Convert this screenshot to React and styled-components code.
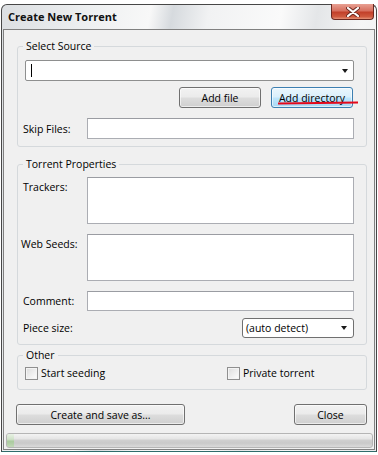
import styled, { createGlobalStyle } from "styled-components";

const Global = createGlobalStyle`
  html, body {
    margin: 0;
    padding: 0;
    background: #fff;
  }
  body {
    width: 378px;
    height: 455px;
    overflow: hidden;
    font-family: "Open Sans", "Noto Sans", sans-serif;
    font-size: 10.5px;
    color: #000;
  }
  * { box-sizing: border-box; }
`;

export default function App() {
  return (
    <>
      <Global />
      <Window>
        <TitleBar>
          <Title>Create New Torrent</Title>
          <CloseX>
            <svg width="14" height="10" viewBox="0 0 14 10">
              <path d="M2 1 L12 9 M12 1 L2 9" stroke="#6b2a22" strokeWidth="4" strokeLinecap="round" />
              <path d="M2 1 L12 9 M12 1 L2 9" stroke="#fff" strokeWidth="2.2" strokeLinecap="round" />
            </svg>
          </CloseX>
        </TitleBar>

        <Client>
          <Content>
            <Group $pad="0 12px 7px 5px">
              <Legend>Select Source</Legend>
              <Combo>
                <Caret />
                <Arrow />
              </Combo>
              <ButtonRow>
                <Button $w={82}>Add file</Button>
                <Marked>
                  <Button $w={82} $focus>Add directory</Button>
                  <RedLine />
                </Marked>
              </ButtonRow>
              <FieldRow $top={10}>
                <Label>Skip Files:</Label>
                <Input />
              </FieldRow>
            </Group>

            <Group $top={10} $pad="0 12px 6px 5px">
              <Legend>Torrent Properties</Legend>
              <FieldRow $top={6} $start>
                <Label $padTop={3}>Trackers:</Label>
                <Area />
              </FieldRow>
              <FieldRow $top={10} $start>
                <Label $padTop={3} $shift={-2}>Web Seeds:</Label>
                <Area />
              </FieldRow>
              <FieldRow $top={10}>
                <Label>Comment:</Label>
                <Input $h={20} />
              </FieldRow>
              <FieldRow $top={7}>
                <Label>Piece size:</Label>
                <Select>
                  <span>(auto detect)</span>
                  <Arrow />
                </Select>
              </FieldRow>
            </Group>

            <Group $top={3} $pad="0 14px 9px 5px">
              <Legend>Other</Legend>
              <CheckRow>
                <Check $w={202}>
                  <Box />
                  Start seeding
                </Check>
                <Check>
                  <Box />
                  Private torrent
                </Check>
              </CheckRow>
            </Group>

            <Actions>
              <Button $w={169}>Create and save as...</Button>
              <Button $w={73}>Close</Button>
            </Actions>
          </Content>

          <Progress>
            <Fill style={{ width: "2%" }} />
          </Progress>
        </Client>
      </Window>
    </>
  );
}

const Window = styled.div`
  margin: 4px 0 0 1px;
  width: 376px;
  height: 448px;
  border: 1px solid #474747;
  border-bottom-color: #2f6c6c;
  border-radius: 6px 6px 0 0;
  background: linear-gradient(100deg, #dcdfe2 0%, #eef0f1 20%, #f8f8f8 33%, #d6dade 38%, #f1f2f3 46%, #fafafa 62%, #e4e6e8 70%, #f5f6f6 80%, #e8eaec 100%);
  padding: 0 1px 1px 1px;
  display: flex;
  flex-direction: column;
`;

const TitleBar = styled.div`
  height: 24px;
  display: flex;
  justify-content: space-between;
  align-items: flex-start;
  padding-left: 5px;
`;

const Title = styled.div`
  font-weight: 700;
  font-size: 11px;
  line-height: 24px;
  color: #111;
`;

const CloseX = styled.div`
  margin-top: -1px;
  margin-right: 1px;
  width: 43px;
  height: 16px;
  border: 1px solid #6a2820;
  border-top: none;
  border-radius: 0 0 4px 4px;
  background: linear-gradient(to bottom, #e8a093 0%, #d7705f 45%, #c2402a 55%, #cf5a3f 85%, #e6947a 100%);
  display: flex;
  align-items: center;
  justify-content: center;
`;

const Client = styled.div`
  flex: 1;
  background: #f0f0f0;
  border: 1px solid #808080;
  display: flex;
  flex-direction: column;
  padding-bottom: 1px;
`;

const Content = styled.div`
  padding: 9px 7px 0 13px;
  display: flex;
  flex-direction: column;
`;

const Group = styled.fieldset`
  margin: ${(p) => p.$top || 0}px 0 0 0;
  padding: ${(p) => p.$pad};
  min-width: 0;
  border: 1px solid #d5d9dc;
  border-radius: 3px;
  display: flex;
  flex-direction: column;
`;

const Legend = styled.legend`
  padding: 0 3px;
  line-height: 14px;
  color: #000;
`;

const Combo = styled.div`
  margin: 7px 0 0 2px;
  height: 21px;
  background: #fff;
  border: 1px solid #8e8f8f;
  border-radius: 2px;
  display: flex;
  align-items: center;
  justify-content: space-between;
  padding: 0 4px 0 5px;
`;

const Caret = styled.div`
  width: 1px;
  height: 13px;
  background: #000;
`;

const Arrow = styled.div`
  width: 0;
  height: 0;
  border-left: 3.5px solid transparent;
  border-right: 3.5px solid transparent;
  border-top: 4px solid #1a1a1a;
  margin-right: 1px;
`;

const ButtonRow = styled.div`
  margin-top: 6px;
  display: flex;
  justify-content: flex-end;
  gap: 10px;
  padding-right: 1px;
`;

const Button = styled.div`
  width: ${(p) => p.$w}px;
  height: 21px;
  border: 1px solid ${(p) => (p.$focus ? "#3c7fb1" : "#707070")};
  border-radius: 3px;
  background: ${(p) =>
    p.$focus
      ? "linear-gradient(to bottom, #eaf6fd 0%, #d9f0fc 48%, #bee6fd 52%, #a7d9f5 100%)"
      : "linear-gradient(to bottom, #f2f2f2 0%, #ebebeb 48%, #dddddd 52%, #cfcfcf 100%)"};
  box-shadow: inset 0 0 0 1px rgba(255, 255, 255, 0.6);
  display: flex;
  align-items: center;
  justify-content: center;
  color: #000;
`;

const Marked = styled.div`
  position: relative;
`;

const RedLine = styled.div`
  position: absolute;
  left: 7px;
  top: 15px;
  width: 80px;
  height: 2px;
  background: #e3081b;
  transform: rotate(-0.8deg);
`;

const FieldRow = styled.div`
  margin-top: ${(p) => p.$top}px;
  display: flex;
  align-items: ${(p) => (p.$start ? "flex-start" : "center")};
  justify-content: space-between;
`;

const Label = styled.div`
  flex: 0 0 ${(p) => 64 - (p.$shift || 0)}px;
  line-height: 14px;
  padding-top: ${(p) => p.$padTop || 0}px;
  margin-left: ${(p) => p.$shift || 0}px;
`;

const Input = styled.div`
  flex: 1;
  height: ${(p) => p.$h || 21}px;
  background: #fff;
  border: 1px solid #abadb3;
  border-top-color: #9a9ca2;
`;

const Area = styled(Input)`
  height: 47px;
`;

const Select = styled.div`
  width: 112px;
  height: 20px;
  background: #fff;
  border: 1px solid #707070;
  border-radius: 3px;
  display: flex;
  align-items: center;
  justify-content: space-between;
  padding: 0 5px 0 3px;
`;

const CheckRow = styled.div`
  margin-top: 4px;
  display: flex;
  padding-left: 2px;
`;

const Check = styled.label`
  flex: ${(p) => (p.$w ? `0 0 ${p.$w}px` : "1")};
  display: flex;
  align-items: center;
  gap: 3px;
  line-height: 14px;
`;

const Box = styled.span`
  width: 13px;
  height: 13px;
  border: 1px solid #8f8f8f;
  background: linear-gradient(135deg, #dcdcdc 0%, #f4f4f4 70%, #fdfdfd 100%);
  box-shadow: inset 0 0 0 1px #f4f4f4;
`;

const Actions = styled.div`
  margin-top: 14px;
  margin-left: -1px;
  display: flex;
  justify-content: space-between;
`;

const Progress = styled.div`
  margin: auto 1px 0 2px;
  height: 15px;
  border: 1px solid #b5b5b5;
  border-radius: 3px;
  background: linear-gradient(to bottom, #f3f3f3 0%, #e6e6e6 35%, #cfcfcf 50%, #c9c9c9 70%, #dadada 100%);
  overflow: hidden;
`;

const Fill = styled.div`
  height: 100%;
  background: linear-gradient(to bottom, #e3f1de 0%, #c3dfb8 45%, #9ccb8b 55%, #b8d8aa 100%);
  opacity: 0.7;
`;
